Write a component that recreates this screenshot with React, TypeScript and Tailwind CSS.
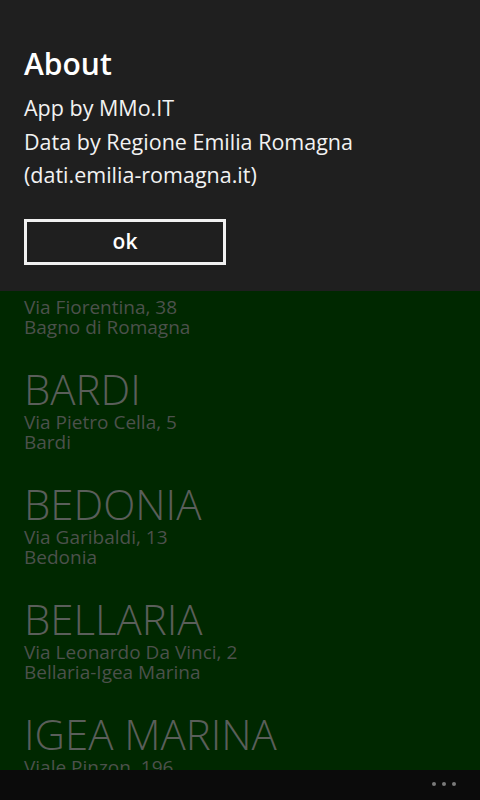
import React from "react";

const items = [
  { name: "ARGENTA", street: "Via Matteotti, 2", city: "Argenta" },
  { name: "BAGNACAVALLO", street: "Piazza della Libertà, 12", city: "Bagnacavallo" },
  { name: "BAGNO DI ROMAGNA", street: "Via Fiorentina, 38", city: "Bagno di Romagna" },
  { name: "BARDI", street: "Via Pietro Cella, 5", city: "Bardi" },
  { name: "BEDONIA", street: "Via Garibaldi, 13", city: "Bedonia" },
  { name: "BELLARIA", street: "Via Leonardo Da Vinci, 2", city: "Bellaria-Igea Marina" },
  { name: "IGEA MARINA", street: "Viale Pinzon, 196", city: "Bellaria-Igea Marina" },
];

export default function App() {
  return (
    <div
      className="relative w-[480px] h-[800px] overflow-hidden bg-[#002800] flex flex-col"
      style={{ fontFamily: '"Open Sans", "Noto Sans", sans-serif' }}
    >
      <div className="flex-1 overflow-hidden pt-[21px] pl-6 flex flex-col gap-[29px]">
        {items.map((it) => (
          <div key={it.name} className="flex flex-col">
            <div className="text-[42px] leading-[46px] font-light text-[#5a5e5a] whitespace-nowrap">
              {it.name}
            </div>
            <div className="text-[19px] leading-[20px] text-[#4c514c] whitespace-nowrap">{it.street}</div>
            <div className="text-[19px] leading-[20px] text-[#4c514c] whitespace-nowrap">{it.city}</div>
          </div>
        ))}
      </div>

      <div className="h-[30px] bg-[#0b0b0b] flex items-center justify-end gap-[6px] pr-[24px] pb-[2px]">
        <span className="w-[4px] h-[4px] rounded-full bg-[#7a7a7a]" />
        <span className="w-[4px] h-[4px] rounded-full bg-[#7a7a7a]" />
        <span className="w-[4px] h-[4px] rounded-full bg-[#7a7a7a]" />
      </div>

      <div className="absolute top-0 left-0 w-full h-[291px] bg-[#1f1f1f] pl-6 pt-[45px] flex flex-col">
        <div className="text-[30px] leading-[38px] font-semibold text-white">About</div>
        <div className="mt-[8px] text-[21.5px] leading-[33.5px] text-[#f2f2f2] whitespace-nowrap">
          <div>App by MMo.IT</div>
          <div>Data by Regione Emilia Romagna</div>
          <div>(dati.emilia-romagna.it)</div>
        </div>
        <button className="mt-[27px] w-[202px] h-[46px] border-[3px] border-[#f0f0f0] flex items-center justify-center text-[21px] font-semibold text-white bg-transparent">
          ok
        </button>
      </div>
    </div>
  );
}
